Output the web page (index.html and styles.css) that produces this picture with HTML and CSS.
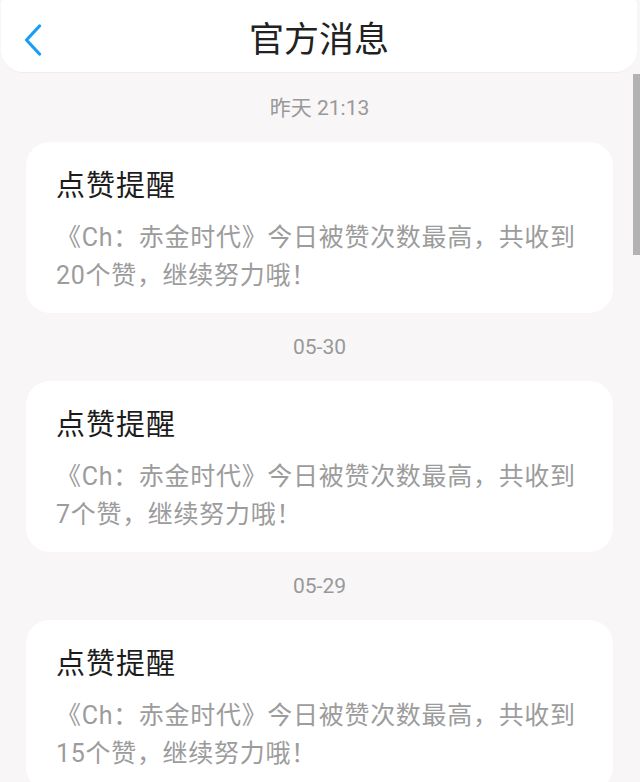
FILE: index.html
```html
<!DOCTYPE html>
<html lang="zh-CN">

<head>
    <meta charset="UTF-8" />
    <meta name="viewport" content="width=device-width, initial-scale=1.0" />
    <title>官方消息</title>
    <link rel="stylesheet" href="styles.css">
</head>

<body>
    <div class="page">
        <header class="top-bar">
            <a class="back" href="#">
                <svg width="18" height="32" viewBox="0 0 18 32">
                    <polyline points="15.5,2 2.5,16 15.5,30" fill="none" stroke="#1b9df4" stroke-width="3.2"
                        stroke-linecap="round" stroke-linejoin="round" />
                </svg>
            </a>
            <h1>官方消息</h1>
        </header>

        <div class="list">
            <div class="time">昨天 21:13</div>
            <div class="card">
                <h2>点赞提醒</h2>
                <p>《Ch：赤金时代》今日被赞次数最高，共收到20个赞，继续努力哦！</p>
            </div>

            <div class="time">05-30</div>
            <div class="card">
                <h2>点赞提醒</h2>
                <p>《Ch：赤金时代》今日被赞次数最高，共收到7个赞，继续努力哦！</p>
            </div>

            <div class="time">05-29</div>
            <div class="card">
                <h2>点赞提醒</h2>
                <p>《Ch：赤金时代》今日被赞次数最高，共收到15个赞，继续努力哦！</p>
            </div>
        </div>

        <div class="scrollbar"></div>
    </div>
</body>

</html>
```

FILE: styles.css
```css
html,
body {
    margin: 0;
    padding: 0;
    height: 100%;
    overflow: hidden;
}

body {
    background-color: #f8f6f7;
    font-family: Roboto, "Noto Sans CJK SC", sans-serif;
}

.page {
    position: relative;
    height: 100%;
}

.top-bar {
    display: flex;
    align-items: center;
    justify-content: center;
    position: relative;
    height: 72px;
    margin: 0 3px 0 1px;
    background-color: white;
    border-bottom: 1px solid #efeded;
    border-radius: 4px 4px 22px 22px;
}

.top-bar h1 {
    margin: 0;
    font-size: 35px;
    font-weight: normal;
    color: #222;
}

.back {
    position: absolute;
    left: 23px;
    top: 24px;
    display: block;
    height: 32px;
}

.list {
    padding: 1px 27px 0 26px;
}

.time {
    height: 68px;
    line-height: 68px;
    text-align: center;
    font-size: 21px;
    color: #999;
}

.card {
    background-color: white;
    border-radius: 24px;
    padding: 24px 30px 18px;
}

.card h2 {
    margin: 0;
    font-size: 29px;
    line-height: 40px;
    font-weight: normal;
    letter-spacing: 1px;
    color: #1c1c1c;
}

.card p {
    margin: 13px 0 0;
    font-size: 25px;
    line-height: 38px;
    letter-spacing: 0.7px;
    color: #9c9c9c;
}

.scrollbar {
    position: absolute;
    right: 0;
    top: 74px;
    width: 7px;
    height: 181px;
    background-color: #b3b3b3;
}
```
